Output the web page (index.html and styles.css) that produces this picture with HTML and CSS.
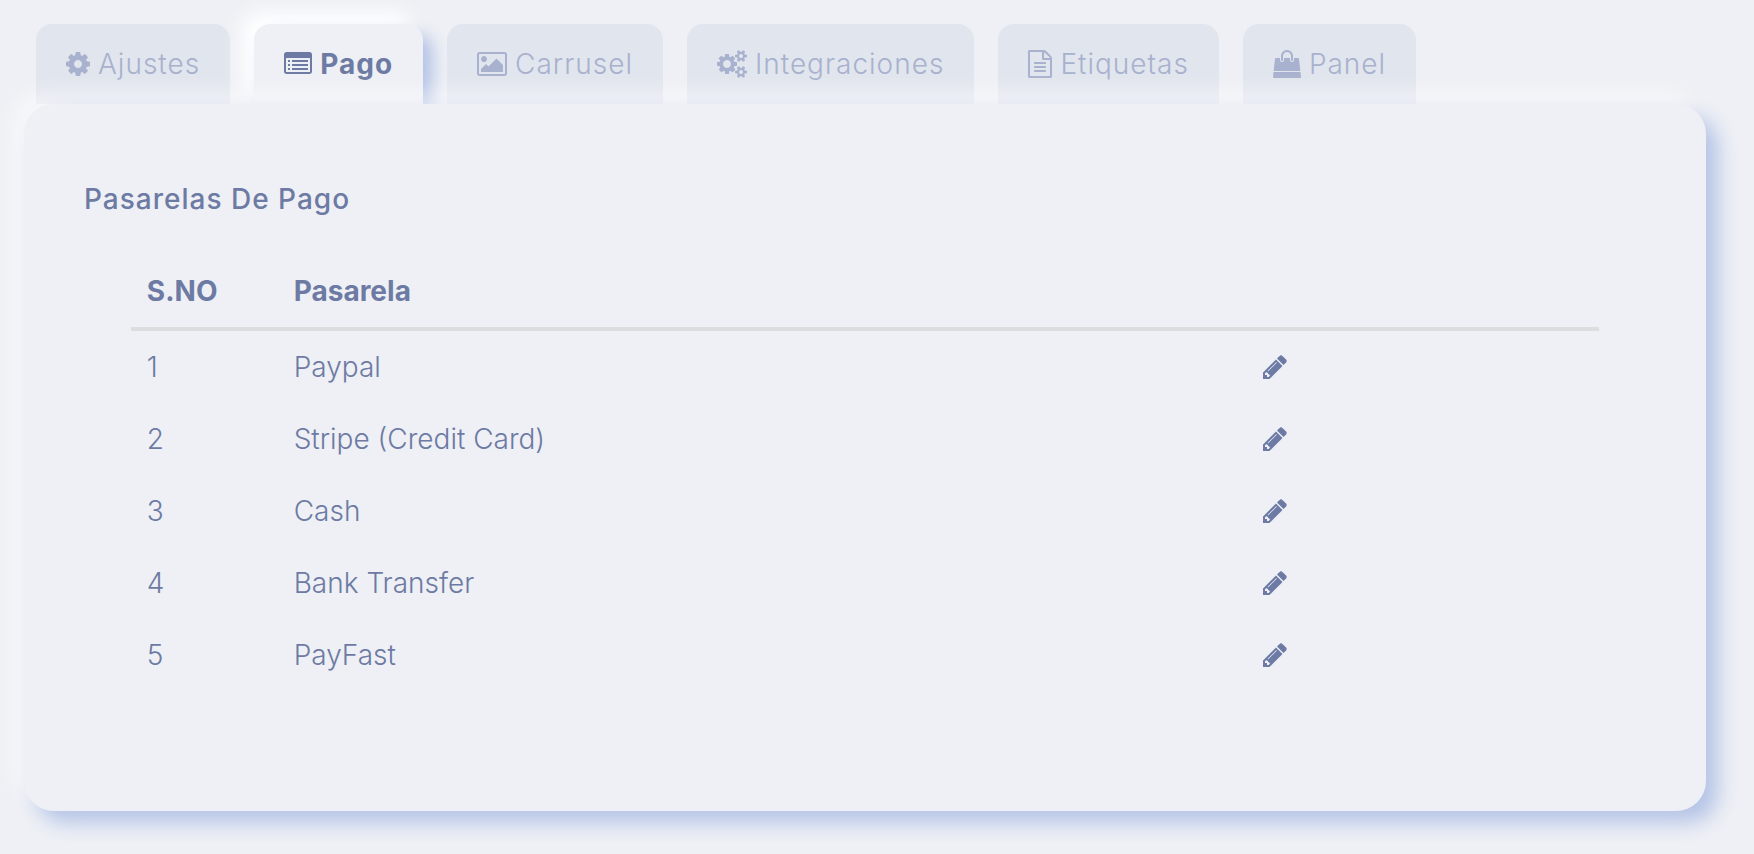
FILE: index.html
```html
<!DOCTYPE html>
<html lang="es">
<head>
  <meta charset="UTF-8" />
  <meta name="viewport" content="width=device-width, initial-scale=1.0" />
  <title>Pasarelas De Pago</title>
  <link rel="stylesheet" href="styles.css">
</head>
<body>
  <svg class="sprite" aria-hidden="true">
    <symbol id="pencil" viewBox="128 0 1536 1792"><path d="M491 1536l91-91-235-235-91 91v107h128v128h107zm523-928q0-22-22-22-10 0-17 7l-542 542q-7 7-7 17 0 22 22 22 10 0 17-7l542-542q7-7 7-17zm-54-192l416 416-832 832h-416v-416zm683 96q0 53-37 90l-166 166-416-416 166-165q36-38 90-38 53 0 91 38l235 234q37 39 37 91z"/></symbol>
  </svg>

  <div class="tabs" role="tablist">
    <button class="tab" role="tab" type="button">
      <svg class="icon" viewBox="128 0 1536 1792"><path d="M1152 896q0-106-75-181t-181-75-181 75-75 181 75 181 181 75 181-75 75-181zm512-109v222q0 12-8 23t-20 13l-185 28q-19 54-39 91 35 50 107 138 10 12 10 25t-9 23q-27 37-99 108t-94 71q-12 0-26-9l-138-108q-44 23-91 38-16 136-29 186-7 28-36 28h-222q-14 0-24.5-8.5t-11.5-21.5l-28-184q-49-16-90-37l-141 107q-10 9-25 9-14 0-25-11-126-114-165-168-7-10-7-23 0-12 8-23 15-21 51-66.5t54-70.5q-27-50-41-99l-183-27q-13-2-21-12.5t-8-23.5v-222q0-12 8-23t19-13l186-28q14-46 39-92-40-57-107-138-10-12-10-24 0-10 9-23 26-36 98.5-107.5t94.5-71.5q13 0 26 10l138 107q44-23 91-38 16-136 29-186 7-28 36-28h222q14 0 24.5 8.5t11.5 21.5l28 184q49 16 90 37l142-107q9-9 24-9 13 0 25 10 129 119 165 170 7 8 7 22 0 12-8 23-15 21-51 66.5t-54 70.5q26 50 41 98l183 28q13 2 21 12.5t8 23.5z"/></svg>
      Ajustes
    </button>
    <button class="tab active" role="tab" type="button" aria-selected="true">
      <svg class="icon" viewBox="0 0 1792 1792"><path fill-rule="evenodd" d="M160 128h1472q66 0 113 47t47 113v1088q0 66-47 113t-113 47h-1472q-66 0-113-47t-47-113v-1088q0-66 47-113t113-47zM160 512q-32 0-32 32v832q0 32 32 32h1472q32 0 32-32v-832q0-32-32-32z"/><path d="M256 640h128v128h-128zM512 640h1024v128h-1024zM256 896h128v128h-128zM512 896h1024v128h-1024zM256 1152h128v128h-128zM512 1152h1024v128h-1024z"/></svg>
      Pago
    </button>
    <button class="tab" role="tab" type="button">
      <svg class="icon" viewBox="-64 0 1920 1792"><path d="M576 576q0 80-56 136t-136 56-136-56-56-136 56-136 136-56 136 56 56 136zm1024 384v448h-1408v-192l320-320 160 160 512-512zm96-704h-1600q-13 0-22.5 9.5t-9.5 22.5v1216q0 13 9.5 22.5t22.5 9.5h1600q13 0 22.5-9.5t9.5-22.5v-1216q0-13-9.5-22.5t-22.5-9.5zm160 32v1216q0 66-47 113t-113 47h-1600q-66 0-113-47t-47-113v-1216q0-66 47-113t113-47h1600q66 0 113 47t47 113z"/></svg>
      Carrusel
    </button>
    <button class="tab" role="tab" type="button">
      <svg class="icon" viewBox="-64 0 1920 1792"><path d="M832 896q0-106-75-181t-181-75-181 75-75 181 75 181 181 75 181-75 75-181zm768 512q0-52-38-90t-90-38-90 38-38 90q0 53 37.5 90.5t90.5 37.5 90.5-37.5 37.5-90.5zm0-1024q0-52-38-90t-90-38-90 38-38 90q0 53 37.5 90.5t90.5 37.5 90.5-37.5 37.5-90.5zm-384 421v185q0 10-7 19.5t-16 10.5l-155 24q-11 35-32 76 34 48 90 115 7 11 7 20 0 12-7 19-23 30-82.5 89.5t-78.5 59.5q-11 0-21-7l-115-90q-37 19-77 31-11 108-23 155-7 24-30 24h-186q-11 0-20-7.5t-10-17.5l-23-153q-34-10-75-31l-118 89q-7 7-20 7-11 0-21-8-144-133-144-160 0-9 7-19 10-14 41-53t47-61q-23-44-35-82l-152-24q-10-1-17-9.5t-7-19.5v-185q0-10 7-19.5t16-10.5l155-24q11-35 32-76-34-48-90-115-7-11-7-20 0-12 7-20 22-30 82-89t79-59q11 0 21 7l115 90q34-18 77-32 11-108 23-154 7-24 30-24h186q11 0 20 7.5t10 17.5l23 153q34 10 75 31l118-89q8-7 20-7 11 0 21 8 144 133 144 160 0 8-7 19-12 16-42 54t-45 60q23 48 34 82l152 23q10 2 17 10.5t7 19.5zm640 533v140q0 16-149 31-12 27-30 52 51 113 51 138 0 4-4 7-122 71-124 71-8 0-46-47t-52-68q-20 2-30 2t-30-2q-14 21-52 68t-46 47q-2 0-124-71-4-3-4-7 0-25 51-138-18-25-30-52-149-15-149-31v-140q0-16 149-31 13-29 30-52-51-113-51-138 0-4 4-7 4-2 35-20t59-34 30-16q8 0 46 46.5t52 67.5q20-2 30-2t30 2q51-71 92-112l6-2q4 0 124 70 4 3 4 7 0 25-51 138 17 23 30 52 149 15 149 31zm0-1024v140q0 16-149 31-12 27-30 52 51 113 51 138 0 4-4 7-122 71-124 71-8 0-46-47t-52-68q-20 2-30 2t-30-2q-14 21-52 68t-46 47q-2 0-124-71-4-3-4-7 0-25 51-138-18-25-30-52-149-15-149-31v-140q0-16 149-31 13-29 30-52-51-113-51-138 0-4 4-7 4-2 35-20t59-34 30-16q8 0 46 46.5t52 67.5q20-2 30-2t30 2q51-71 92-112l6-2q4 0 124 70 4 3 4 7 0 25-51 138 17 23 30 52 149 15 149 31z"/></svg>
      Integraciones
    </button>
    <button class="tab" role="tab" type="button">
      <svg class="icon" viewBox="128 0 1536 1792"><path d="M1596 380q28 28 48 76t20 88v1152q0 40-28 68t-68 28h-1344q-40 0-68-28t-28-68v-1600q0-40 28-68t68-28h896q40 0 88 20t76 48zm-444-244v376h376q-10-29-22-41l-313-313q-12-12-41-22zm384 1528v-1024h-416q-40 0-68-28t-28-68v-416h-768v1536h1280zm-1024-864q0-14 9-23t23-9h704q14 0 23 9t9 23v64q0 14-9 23t-23 9h-704q-14 0-23-9t-9-23v-64zm736 224q14 0 23 9t9 23v64q0 14-9 23t-23 9h-704q-14 0-23-9t-9-23v-64q0-14 9-23t23-9h704zm0 256q14 0 23 9t9 23v64q0 14-9 23t-23 9h-704q-14 0-23-9t-9-23v-64q0-14 9-23t23-9h704z"/></svg>
      Etiquetas
    </button>
    <button class="tab" role="tab" type="button">
      <svg class="icon" viewBox="0 0 1792 1792"><path d="M1757 1408l35 313q3 28-16 50-19 21-48 21h-1664q-29 0-48-21-19-22-16-50l35-313h1722zm-93-839l86 775h-1708l86-775q3-24 21-40.5t43-16.5h256v128q0 53 37.5 90.5t90.5 37.5 90.5-37.5 37.5-90.5v-128h384v128q0 53 37.5 90.5t90.5 37.5 90.5-37.5 37.5-90.5v-128h256q25 0 43 16.5t21 40.5zm-384-185v256q0 26-19 45t-45 19-45-19-19-45v-256q0-106-75-181t-181-75-181 75-75 181v256q0 26-19 45t-45 19-45-19-19-45v-256q0-159 112.5-271.5t271.5-112.5 271.5 112.5 112.5 271.5z"/></svg>
      Panel
    </button>
  </div>

  <div class="panel" role="tabpanel">
    <h2>Pasarelas De Pago</h2>
    <table class="gateways">
      <thead>
        <tr>
          <th class="col-no">S.NO</th>
          <th class="col-name">Pasarela</th>
          <th></th>
        </tr>
      </thead>
      <tbody>
        <tr>
          <td>1</td>
          <td>Paypal</td>
          <td><a href="#" aria-label="Editar Paypal"><svg class="icon" viewBox="0 0 24 28"><use href="#pencil"/></svg></a></td>
        </tr>
        <tr>
          <td>2</td>
          <td>Stripe (Credit Card)</td>
          <td><a href="#" aria-label="Editar Stripe"><svg class="icon" viewBox="0 0 24 28"><use href="#pencil"/></svg></a></td>
        </tr>
        <tr>
          <td>3</td>
          <td>Cash</td>
          <td><a href="#" aria-label="Editar Cash"><svg class="icon" viewBox="0 0 24 28"><use href="#pencil"/></svg></a></td>
        </tr>
        <tr>
          <td>4</td>
          <td>Bank Transfer</td>
          <td><a href="#" aria-label="Editar Bank Transfer"><svg class="icon" viewBox="0 0 24 28"><use href="#pencil"/></svg></a></td>
        </tr>
        <tr>
          <td>5</td>
          <td>PayFast</td>
          <td><a href="#" aria-label="Editar PayFast"><svg class="icon" viewBox="0 0 24 28"><use href="#pencil"/></svg></a></td>
        </tr>
      </tbody>
    </table>
  </div>
</body>
</html>
```
FILE: styles.css
```css
* {
  box-sizing: border-box;
}
body {
  font-family: Inter, sans-serif;
  font-size: 28px;
  font-weight: 300;
  line-height: 40px;
  background-color: #eef0f5;
  color: #6d7aa3;
  margin: 0;
  padding: 24px 48px 40px 24px;
}
.sprite {
  display: none;
}
.icon {
  height: 28px;
  fill: currentColor;
  display: block;
}
.tabs {
  display: flex;
  gap: 24px;
  padding: 0 12px;
}
.tab {
  display: flex;
  align-items: center;
  gap: 8px;
  height: 80px;
  padding: 0 30px;
  border: none;
  border-radius: 16px 16px 0 0;
  background: #e1e5ed;
  color: #a8b1ce;
  font: inherit;
  letter-spacing: 1px;
  cursor: pointer;
}
.tab.active {
  background: #eef0f5;
  color: #6d7aa3;
  font-weight: 700;
  box-shadow: 10px 10px 16px #b5c4e6, -12px -12px 20px #fff;
}
.panel {
  position: relative;
  padding: 60px;
  border-radius: 30px;
  background: #eef0f5;
  box-shadow: 12px 12px 20px #b5c4e6, -12px -12px 20px rgba(255,255,255,0.5);
}
h2 {
  margin: 15px 0 36px;
  font-size: 28px;
  font-weight: 500;
  line-height: 40px;
  letter-spacing: 1px;
}
.gateways {
  width: 94%;
  margin: 0 auto 60px;
  border-collapse: separate;
  border-spacing: 0;
  table-layout: fixed;
}
.gateways th, .gateways td {
  padding: 16px;
  text-align: left;
  vertical-align: middle;
}
.gateways th {
  font-weight: 700;
  border-bottom: 4px solid #ddd;
}
.col-no {
  width: 10%;
}
.col-name {
  width: 66%;
}
.gateways a {
  display: block;
  width: 24px;
  color: inherit;
}
```
